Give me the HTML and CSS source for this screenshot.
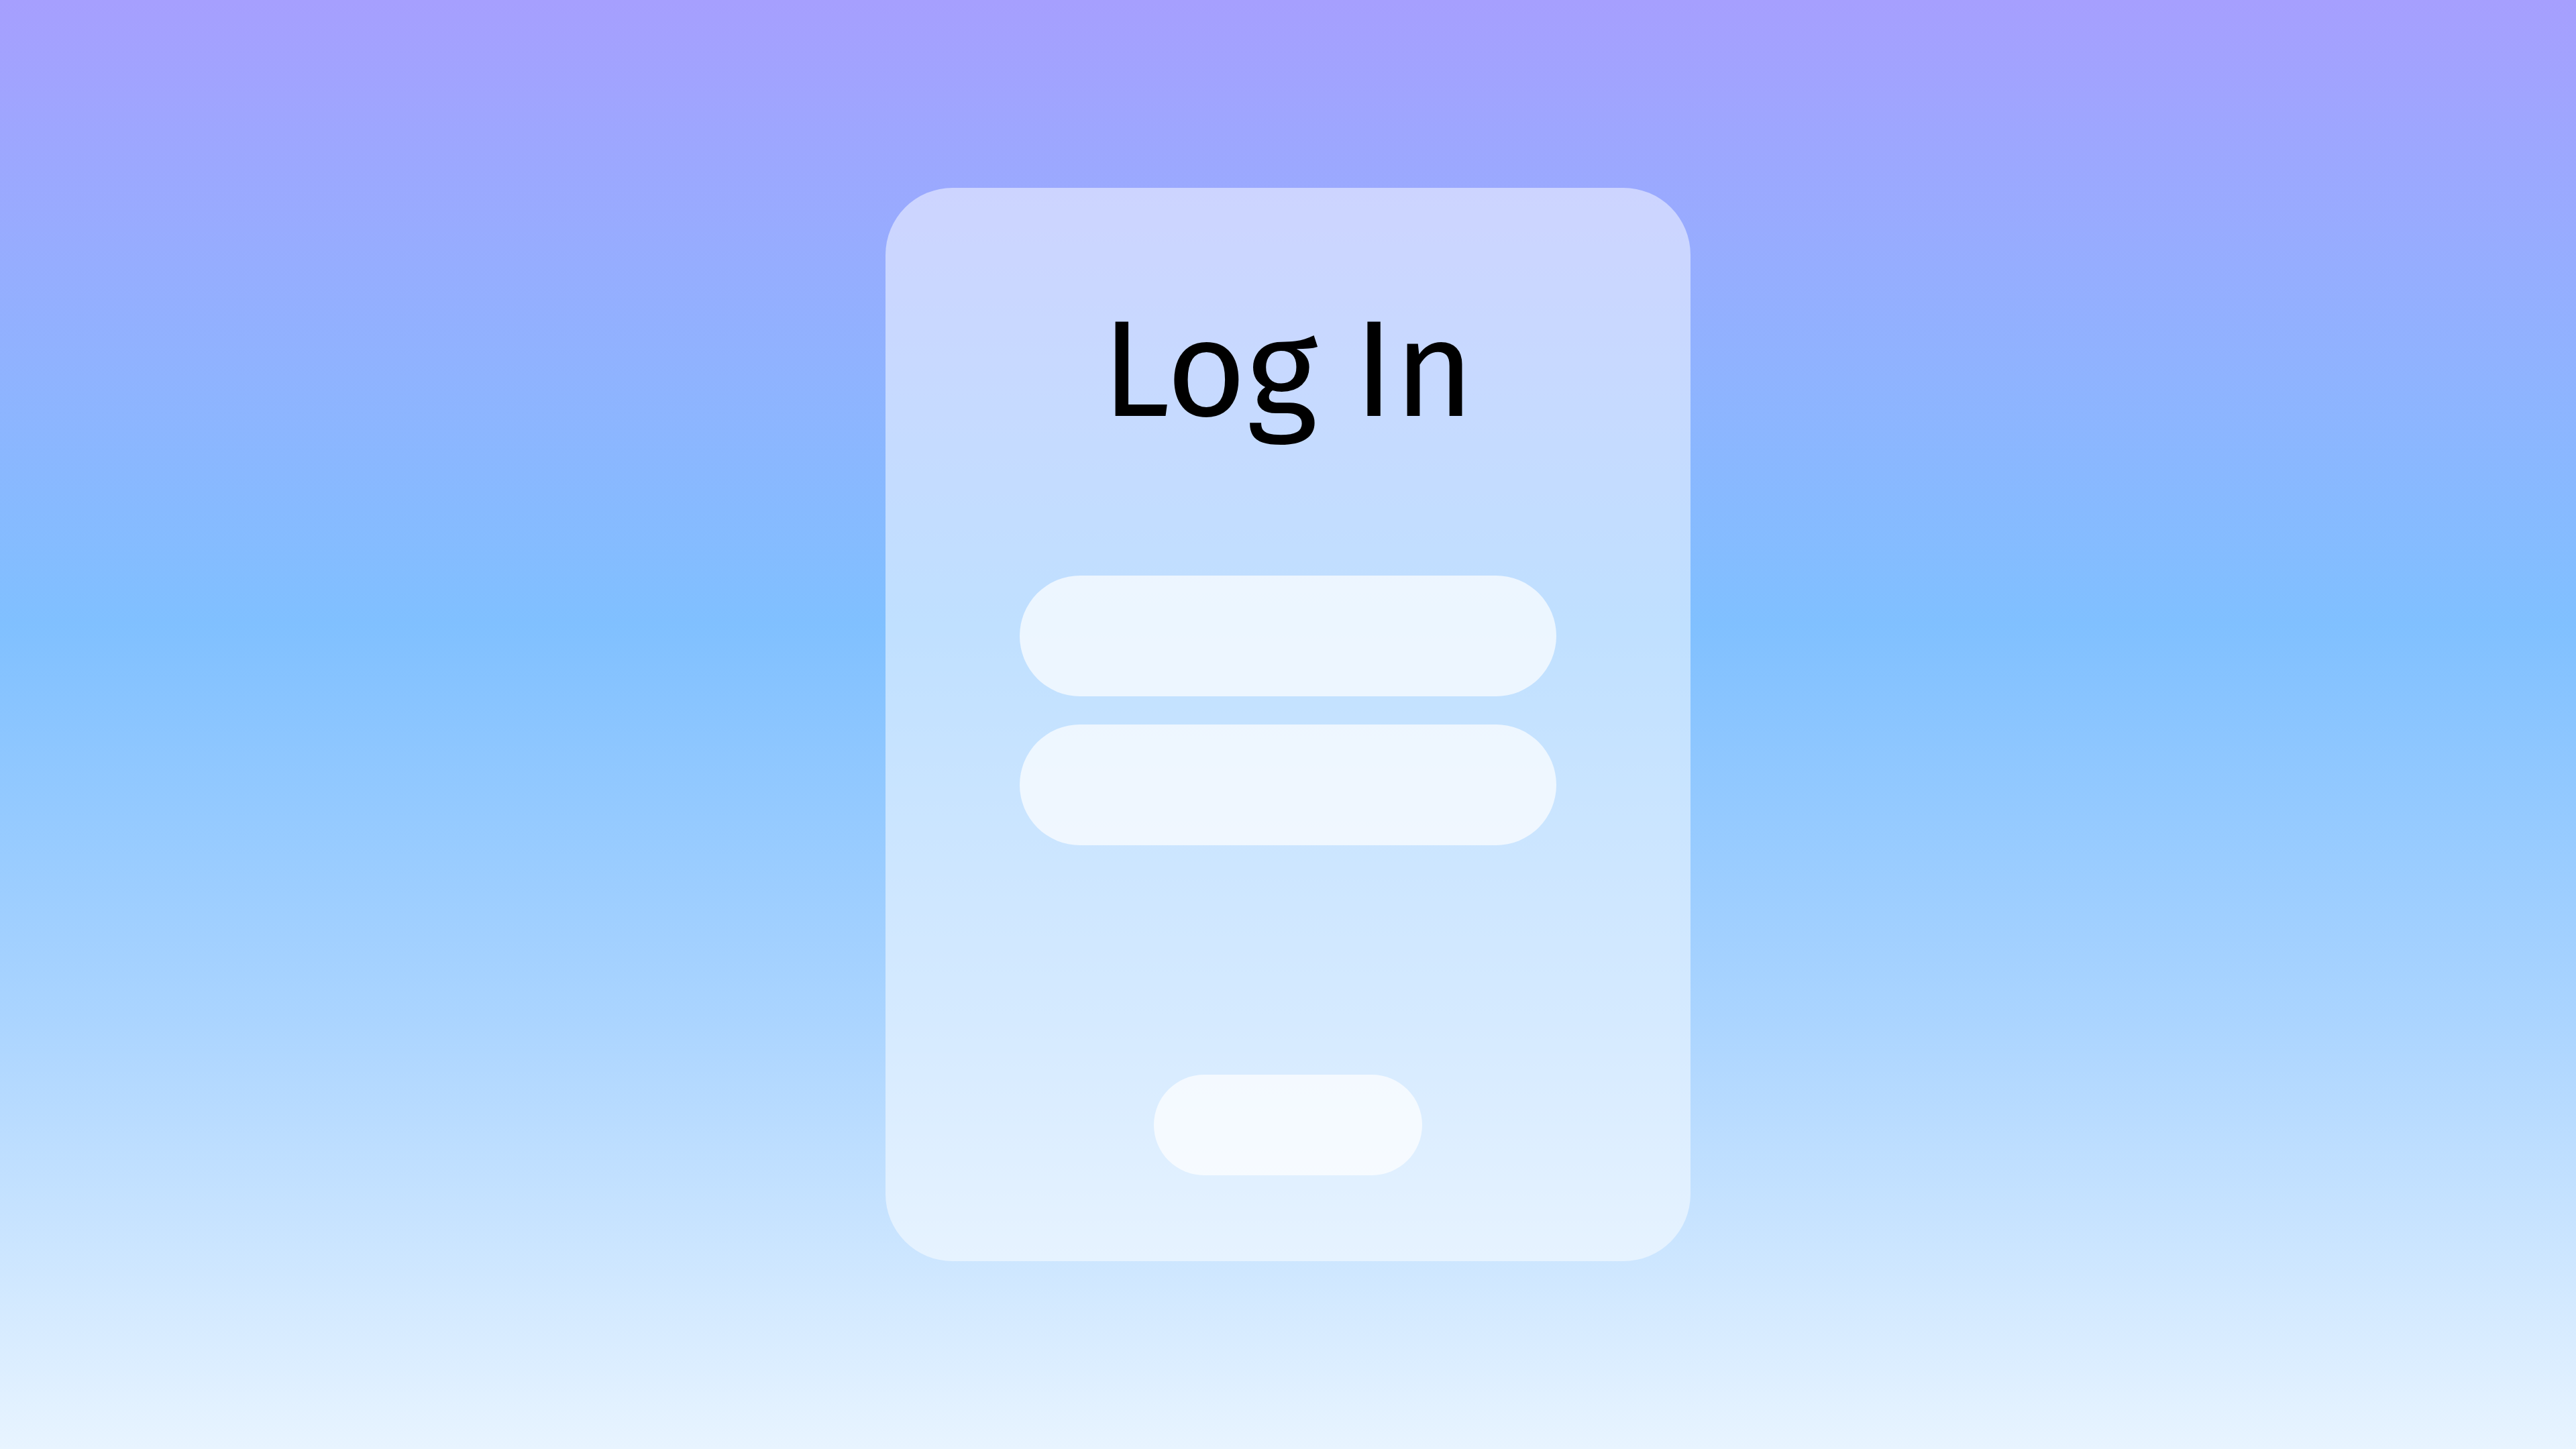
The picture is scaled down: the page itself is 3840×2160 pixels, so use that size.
FILE: index.html
```html
<!DOCTYPE html>
<html lang="en">
<head>
<meta charset="utf-8">
<title>Log In</title>
<link rel="stylesheet" href="styles.css">
</head>
<body>
  <main class="card">
    <h1 class="title">Log In</h1>
    <div class="fields">
      <div class="field"></div>
      <div class="field"></div>
    </div>
    <div class="button"></div>
  </main>
</body>
</html>
```

FILE: styles.css
```css
html, body {
  margin: 0;
  padding: 0;
}

body {
  width: 100vw;
  height: 100vh;
  display: flex;
  align-items: center;
  justify-content: center;
  background: linear-gradient(180deg, #a69ffe 0%, #80c0ff 43%, #aad4ff 70%, #e8f4ff 100%);
  font-family: "Fira Sans", "Open Sans", sans-serif;
}

.card {
  box-sizing: border-box;
  width: 1200px;
  height: 1600px;
  border-radius: 100px;
  background: rgba(255, 255, 255, 0.5);
  display: flex;
  flex-direction: column;
  align-items: center;
  padding-top: 170px;
}

.title {
  margin: 0;
  font-size: 204px;
  line-height: 1;
  font-weight: 400;
  color: #000;
}

.fields {
  margin-top: 204px;
  display: flex;
  flex-direction: column;
  gap: 42px;
}

.field {
  width: 800px;
  height: 180px;
  border-radius: 90px;
  background: rgba(255, 255, 255, 0.7);
}

.button {
  margin-top: 342px;
  width: 400px;
  height: 150px;
  border-radius: 75px;
  background: rgba(255, 255, 255, 0.7);
}
```
